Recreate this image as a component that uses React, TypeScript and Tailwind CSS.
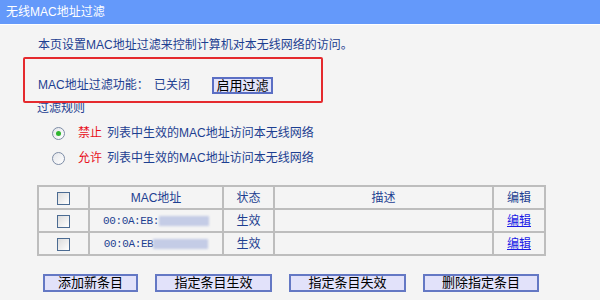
import { FC } from "react"

const font = { fontFamily: '"Liberation Sans", "Noto Sans CJK SC", sans-serif' }

const Radio: FC<{ checked?: boolean }> = ({ checked }) => (
  <span className="flex items-center justify-center w-[13px] h-[13px] rounded-full border border-[#7d8ca6] bg-gradient-to-br from-[#e4e6ea] to-white">
    {checked && <span className="w-[5px] h-[5px] rounded-full bg-[#2fb52f]" />}
  </span>
)

const Checkbox: FC = () => (
  <span className="inline-block align-middle w-[13px] h-[13px] border-[1.5px] border-[#4b6b92] bg-gradient-to-br from-[#dcdcdc] to-white" />
)

const Btn: FC<{ label: string; w: string }> = ({ label, w }) => (
  <button className={`${w} h-[18px] border-2 border-[#6478c4] bg-[#e2e2fa] text-[13px] leading-[14px] text-black`}>
    {label}
  </button>
)

const Blur: FC<{ w: string }> = ({ w }) => (
  <span className={`inline-block align-middle ${w} h-[10px] bg-[#c4cce6] blur-[1.2px]`} />
)

const rows = [
  { mac: "00:0A:EB:", blur: "w-[50px]" },
  { mac: "00:0A:EB", blur: "w-[55px]" },
]

export default function App() {
  return (
    <div className="relative w-[600px] h-[300px] bg-[#f4f4f4] text-[12px] text-[#1d3f91] overflow-hidden" style={font}>
      <div className="h-[25px] bg-[#6499fa] border-b border-white flex items-center pl-[6px] text-white leading-4">
        无线MAC地址过滤
      </div>

      <div className="pl-[38px]">
        <p className="mt-[12px] h-4 leading-4">本页设置MAC地址过滤来控制计算机对本无线网络的访问。</p>

        <div className="mt-[23px] h-[18px] flex items-center leading-4">
          <span className="w-[116px]">MAC地址过滤功能：</span>
          <span className="w-[58px]">已关闭</span>
          <button className="w-[61px] h-[17px] border-2 border-[#5b6fc4] bg-[#e3e3fb] text-[13px] leading-[13px] text-black">
            启用过滤
          </button>
        </div>

        <p className="mt-[6px] -ml-px h-4 leading-4">过滤规则</p>

        <div className="mt-[9px] ml-[14px] h-4 flex items-center leading-4">
          <Radio checked />
          <span className="ml-[13px] text-[#e8101a]">禁止</span>
          <span className="ml-[5px]">列表中生效的MAC地址访问本无线网络</span>
        </div>
        <div className="mt-[9px] ml-[14px] h-4 flex items-center leading-4">
          <Radio />
          <span className="ml-[13px] text-[#e8101a]">允许</span>
          <span className="ml-[5px]">列表中生效的MAC地址访问本无线网络</span>
        </div>
      </div>

      <table className="mt-[19px] ml-[37px] w-[507px] table-fixed border-collapse border-2 border-[#bdbdbd] leading-4">
        <colgroup>
          <col className="w-[51px]" />
          <col className="w-[134px]" />
          <col className="w-[51px]" />
          <col className="w-[219px]" />
          <col className="w-[52px]" />
        </colgroup>
        <thead>
          <tr className="h-[23px]">
            <th className="border-2 border-[#bdbdbd] font-normal"><Checkbox /></th>
            <th className="border-2 border-[#bdbdbd] font-normal">MAC地址</th>
            <th className="border-2 border-[#bdbdbd] font-normal">状态</th>
            <th className="border-2 border-[#bdbdbd] font-normal">描述</th>
            <th className="border-2 border-[#bdbdbd] font-normal">编辑</th>
          </tr>
        </thead>
        <tbody>
          {rows.map((r, i) => (
            <tr key={i} className="h-[23px]">
              <td className="border-2 border-[#bdbdbd] text-center"><Checkbox /></td>
              <td className="border-2 border-[#bdbdbd] text-center whitespace-nowrap">
                <span className="text-[11px] tracking-[-0.4px] align-middle" style={{ fontFamily: '"Liberation Mono", monospace' }}>{r.mac}</span>
                <Blur w={r.blur} />
              </td>
              <td className="border-2 border-[#bdbdbd] text-center">生效</td>
              <td className="border-2 border-[#bdbdbd]"></td>
              <td className="border-2 border-[#bdbdbd] text-center">
                <a className="text-[#1a1ae6] underline">编辑</a>
              </td>
            </tr>
          ))}
        </tbody>
      </table>

      <div className="mt-[18px] ml-[43px] flex gap-[17px]">
        <Btn label="添加新条目" w="w-[95px]" />
        <Btn label="指定条目生效" w="w-[117px]" />
        <Btn label="指定条目失效" w="w-[117px]" />
        <Btn label="删除指定条目" w="w-[116px]" />
      </div>

      <div className="absolute left-[23px] top-[57px] w-[300px] h-[46px] border-2 border-[#e52a2e] rounded-[2px]" />
    </div>
  )
}
